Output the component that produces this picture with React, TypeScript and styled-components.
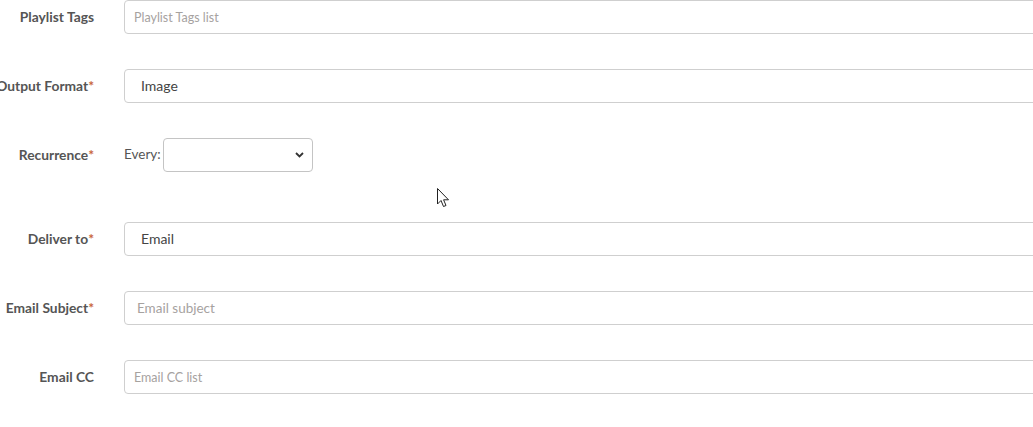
import React from "react";
import styled, { createGlobalStyle } from "styled-components";

const GlobalStyle = createGlobalStyle`
  body {
    margin: 0;
    background: #ffffff;
    font-family: Lato, "Liberation Sans", sans-serif;
    overflow: hidden;
  }
`;

const App = () => {
  return (
    <Page>
      <GlobalStyle />
      <Form>
        <Row>
          <Label>Playlist Tags</Label>
          <TextInput $small placeholder="Playlist Tags list" />
        </Row>
        <Row>
          <Label>
            Output Format<Req>*</Req>
          </Label>
          <ValueBox>Image</ValueBox>
        </Row>
        <Row $tall>
          <Label>
            Recurrence<Req>*</Req>
          </Label>
          <Every>Every:</Every>
          <SelectBox>
            <svg width="9" height="6" viewBox="0 0 9 6">
              <path
                d="M1 1 L4.5 4.5 L8 1"
                fill="none"
                stroke="#333"
                strokeWidth="1.8"
              />
            </svg>
          </SelectBox>
        </Row>
        <Row>
          <Label>
            Deliver to<Req>*</Req>
          </Label>
          <ValueBox>Email</ValueBox>
        </Row>
        <Row>
          <Label>
            Email Subject<Req>*</Req>
          </Label>
          <TextInput placeholder="Email subject" />
        </Row>
        <Row>
          <Label>Email CC</Label>
          <TextInput $small placeholder="Email CC list" />
        </Row>
      </Form>
      <Cursor width="13" height="21" viewBox="0 0 13 21">
        <path
          d="M0.5 0.5 L0.5 16 L4 12.5 L6.5 18.5 L9 17.5 L6.6 11.8 L11.5 11.8 Z"
          fill="#fff"
          stroke="#222"
          strokeWidth="1"
          strokeLinejoin="round"
        />
      </Cursor>
    </Page>
  );
};

export default App;

const Page = styled.div`
  position: relative;
  width: 1033px;
  height: 427px;
  overflow: hidden;
`;

const Form = styled.div`
  display: flex;
  flex-direction: column;
  gap: 35px;
`;

const Row = styled.div<{ $tall?: boolean }>`
  display: flex;
  align-items: center;
  height: 34px;
  margin-bottom: ${(p) => (p.$tall ? "15px" : "0")};
`;

const Label = styled.div`
  width: 94px;
  flex-shrink: 0;
  display: flex;
  justify-content: flex-end;
  white-space: nowrap;
  margin-right: 30px;
  padding-bottom: 2px;
  font-size: 13.8px;
  font-weight: 700;
  color: #555555;
`;

const Req = styled.span`
  color: #c8643b;
`;

const TextInput = styled.input<{ $small?: boolean }>`
  flex-shrink: 0;
  width: 930px;
  height: 34px;
  box-sizing: border-box;
  border: 1px solid #cfcfcf;
  border-radius: 4px;
  padding: 0 0 0 ${(p) => (p.$small ? "9px" : "12px")};
  font-family: Lato, "Liberation Sans", sans-serif;
  font-size: ${(p) => (p.$small ? "12.5px" : "13.5px")};
  outline: none;
  &::placeholder {
    color: #a6a29f;
  }
`;

const ValueBox = styled.div`
  flex-shrink: 0;
  width: 930px;
  height: 34px;
  box-sizing: border-box;
  border: 1px solid #cfcfcf;
  border-radius: 4px;
  padding-left: 16px;
  padding-bottom: 1px;
  display: flex;
  align-items: center;
  font-size: 14px;
  color: #444;
`;

const Every = styled.span`
  font-size: 13.5px;
  color: #555;
  margin-right: 2px;
  padding-bottom: 2px;
`;

const SelectBox = styled.div`
  width: 150px;
  height: 34px;
  box-sizing: border-box;
  border: 1px solid #c4c4c4;
  border-radius: 4px;
  display: flex;
  align-items: center;
  justify-content: flex-end;
  padding-right: 8px;
`;

const Cursor = styled.svg`
  position: absolute;
  left: 437px;
  top: 188px;
`;
